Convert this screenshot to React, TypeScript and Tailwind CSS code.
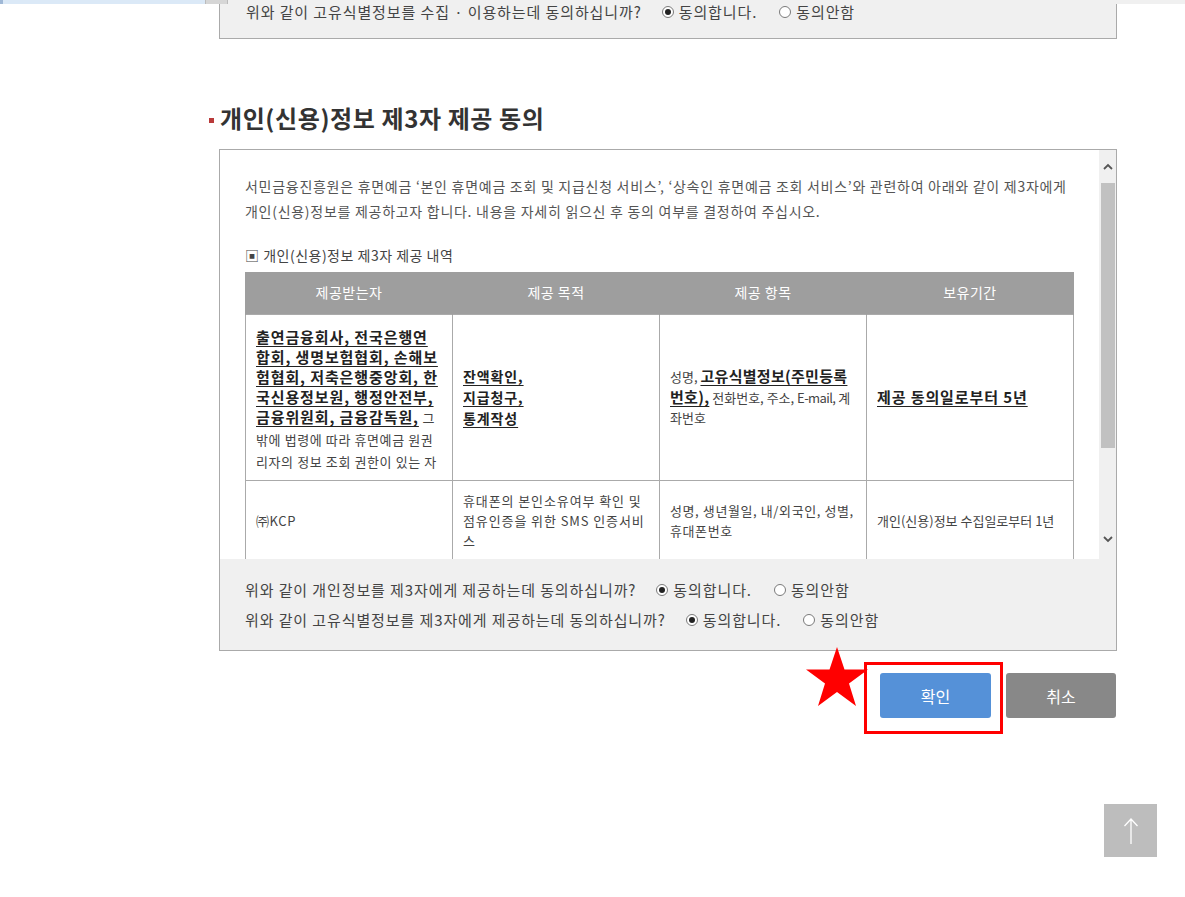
import React from 'react'

const font = { fontFamily: '"Noto Sans CJK KR", "Noto Sans", sans-serif' }

function Radio({ checked }: { checked?: boolean }) {
  return (
    <span className="inline-flex items-center justify-center w-[12px] h-[12px] rounded-full border border-[#7a7a7a] bg-white mr-[5px]">
      {checked && <span className="w-[6px] h-[6px] rounded-full bg-[#222]" />}
    </span>
  )
}

function AgreeRow({ q, gap = 'ml-[20px]' }: { q: string; gap?: string }) {
  return (
    <div className="flex items-center h-[30px] text-[15px] text-[#444] tracking-[0.9px]">
      <span>{q}</span>
      <span className={`flex items-center ${gap}`}>
        <Radio checked />
        동의합니다.
      </span>
      <span className="flex items-center ml-[22px]">
        <Radio />
        동의안함
      </span>
    </div>
  )
}

const B = ({ children, size = 'text-[15px]', track = 'tracking-[0.9px]' }: { children: React.ReactNode; size?: string; track?: string }) => (
  <span className={`font-bold underline underline-offset-[3px] text-[#222] ${track} ${size}`}>{children}</span>
)

export default function App() {
  return (
    <div className="relative w-full min-h-[897px] bg-white overflow-hidden" style={font}>
      {/* 위쪽에 걸린 바 */}
      <div className="absolute top-0 left-0 right-0 h-[4px] flex">
        <div className="w-[3px] bg-[#9fb8d6]" />
        <div className="w-[202px] bg-[#dbe9f7]" />
        <div className="w-[23px] bg-[#d6d6d6] border-x border-[#bbb]" />
        <div className="flex-1 bg-[#f0f0f0]" />
      </div>

      <div className="ml-[209px] w-[907px]">
        {/* 이전 동의 박스 (잘림) */}
        <div className="ml-[10px] w-[898px] h-[42px] -mt-[1px] bg-[#f0f0f0] border border-t-0 border-[#aaa] pl-[26px]">
          <div className="-mt-[3px]">
            <AgreeRow q="위와 같이 고유식별정보를 수집 · 이용하는데 동의하십니까?" />
          </div>
        </div>

        {/* 제목 */}
        <h2 className="flex items-center mt-[64px] h-[30px] text-[24px] font-bold text-[#333] tracking-[0.6px]">
          <span className="w-[5px] h-[5px] bg-[#b93a3a] mr-[6px] mt-[4px]" />
          개인(신용)정보 제3자 제공 동의
        </h2>

        {/* 본문 박스 */}
        <div className="ml-[10px] mt-[16px] w-[898px] border border-[#aaa]">
          <div className="flex h-[409px] overflow-hidden bg-white">
            <div className="flex-1 pl-[25px] pr-[25px] pt-[24px]">
              <p className="text-[14px] leading-[25px] text-[#555] tracking-[0.72px]">
                서민금융진흥원은 휴면예금 ‘본인 휴면예금 조회 및 지급신청 서비스’, ‘상속인 휴면예금 조회 서비스’와 관련하여 아래와 같이 제3자에게
                <br />
                개인(신용)정보를 제공하고자 합니다. 내용을 자세히 읽으신 후 동의 여부를 결정하여 주십시오.
              </p>
              <p className="mt-[21px] text-[14px] leading-[20px] text-[#444] tracking-[0.5px]">▣ 개인(신용)정보 제3자 제공 내역</p>

              <table className="mt-[7px] w-[829px] table-fixed border-collapse text-[13px] text-[#444] tracking-[0.6px]">
                <thead>
                  <tr className="bg-[#9e9e9e] text-white h-[42px] text-[14px] tracking-[0.5px]">
                    <th className="font-normal border-x border-[#9e9e9e]">제공받는자</th>
                    <th className="font-normal border-x border-[#9e9e9e]">제공 목적</th>
                    <th className="font-normal border-x border-[#9e9e9e]">제공 항목</th>
                    <th className="font-normal border-x border-[#9e9e9e]">보유기간</th>
                  </tr>
                </thead>
                <tbody>
                  <tr className="h-[166px]">
                    <td className="border border-[#aaa] px-[10px] pt-[6px] align-middle leading-[19px]">
                      <B>출연금융회사, 전국은행연합회, 생명보험협회, 손해보험협회, 저축은행중앙회, 한국신용정보원, 행정안전부, 금융위원회, 금융감독원,</B>{' '}
                      <span className="leading-[22px]">그 밖에 법령에 따라 휴면예금 원권리자의 정보 조회 권한이 있는 자</span>
                    </td>
                    <td className="border border-[#aaa] px-[10px] align-middle leading-[20px]">
                      <B size="text-[14px]">잔액확인,</B>
                      <br />
                      <B size="text-[14px]">지급청구,</B>
                      <br />
                      <B size="text-[14px]">통계작성</B>
                    </td>
                    <td className="border border-[#aaa] px-[10px] align-middle leading-[20px] tracking-[0px]">
                      성명, <B track="tracking-[0.3px]">고유식별정보(주민등록번호),</B> 전화번호, 주소, <span className="whitespace-nowrap tracking-[-0.6px]">E-mail,</span> 계좌번호
                    </td>
                    <td className="border border-[#aaa] px-[10px] align-middle leading-[20px]">
                      <B>제공 동의일로부터 5년</B>
                    </td>
                  </tr>
                  <tr className="h-[82px]">
                    <td className="border border-[#aaa] px-[10px] leading-[20px]">㈜KCP</td>
                    <td className="border border-[#aaa] px-[10px] leading-[20px] tracking-[0.9px]">휴대폰의 본인소유여부 확인 및 점유인증을 위한 SMS 인증서비스</td>
                    <td className="border border-[#aaa] px-[10px] leading-[20px]">성명, 생년월일, 내/외국인, 성별, 휴대폰번호</td>
                    <td className="border border-[#aaa] px-[10px] leading-[20px] tracking-[0px] whitespace-nowrap">개인(신용)정보 수집일로부터 1년</td>
                  </tr>
                </tbody>
              </table>
            </div>

            {/* 스크롤바 */}
            <div className="w-[17px] bg-[#f0f0f0] flex flex-col items-center">
              <div className="h-[33px] flex items-center justify-center">
                <svg width="10" height="7" viewBox="0 0 10 7">
                  <path d="M1 6 L5 2 L9 6" fill="none" stroke="#555" strokeWidth="1.8" />
                </svg>
              </div>
              <div className="w-[14px] h-[265px] bg-[#c1c1c1]" />
              <div className="flex-1" />
              <div className="h-[40px] flex items-center justify-center">
                <svg width="10" height="7" viewBox="0 0 10 7">
                  <path d="M1 1 L5 5 L9 1" fill="none" stroke="#555" strokeWidth="1.8" />
                </svg>
              </div>
            </div>
          </div>

          <div className="bg-[#f0f0f0] h-[91px] pl-[25px] pt-[16px]">
            <AgreeRow q="위와 같이 개인정보를 제3자에게 제공하는데 동의하십니까?" />
            <AgreeRow q="위와 같이 고유식별정보를 제3자에게 제공하는데 동의하십니까?" />
          </div>
        </div>

        {/* 버튼 */}
        <div className="flex justify-end gap-[15px] mt-[22px] ml-[10px]">
          <button className="w-[111px] h-[45px] rounded-[3px] bg-[#5591d8] text-white text-[16px]">확인</button>
          <button className="w-[110px] h-[45px] rounded-[3px] bg-[#888888] text-white text-[16px]">취소</button>
        </div>
      </div>

      {/* 강조 표시 */}
      <div className="absolute left-[864px] top-[662px] w-[139px] h-[72px] border-[3px] border-[#ff0000]" />
      <svg className="absolute left-[805px] top-[646px]" width="64" height="62" viewBox="0 0 64 62">
        <polygon
          points="32,1 39.5,23.5 63,23.5 44,37.5 51,60 32,46 13,60 20,37.5 1,23.5 24.5,23.5"
          fill="#ff0000"
        />
      </svg>

      {/* 맨 위로 */}
      <div className="absolute left-[1104px] top-[804px] w-[53px] h-[53px] bg-[#bdbdbd] flex items-center justify-center">
        <svg width="16" height="28" viewBox="0 0 16 28">
          <path d="M8 27 V2 M1.5 9 L8 2 L14.5 9" fill="none" stroke="#fff" strokeWidth="1.3" />
        </svg>
      </div>
    </div>
  )
}
